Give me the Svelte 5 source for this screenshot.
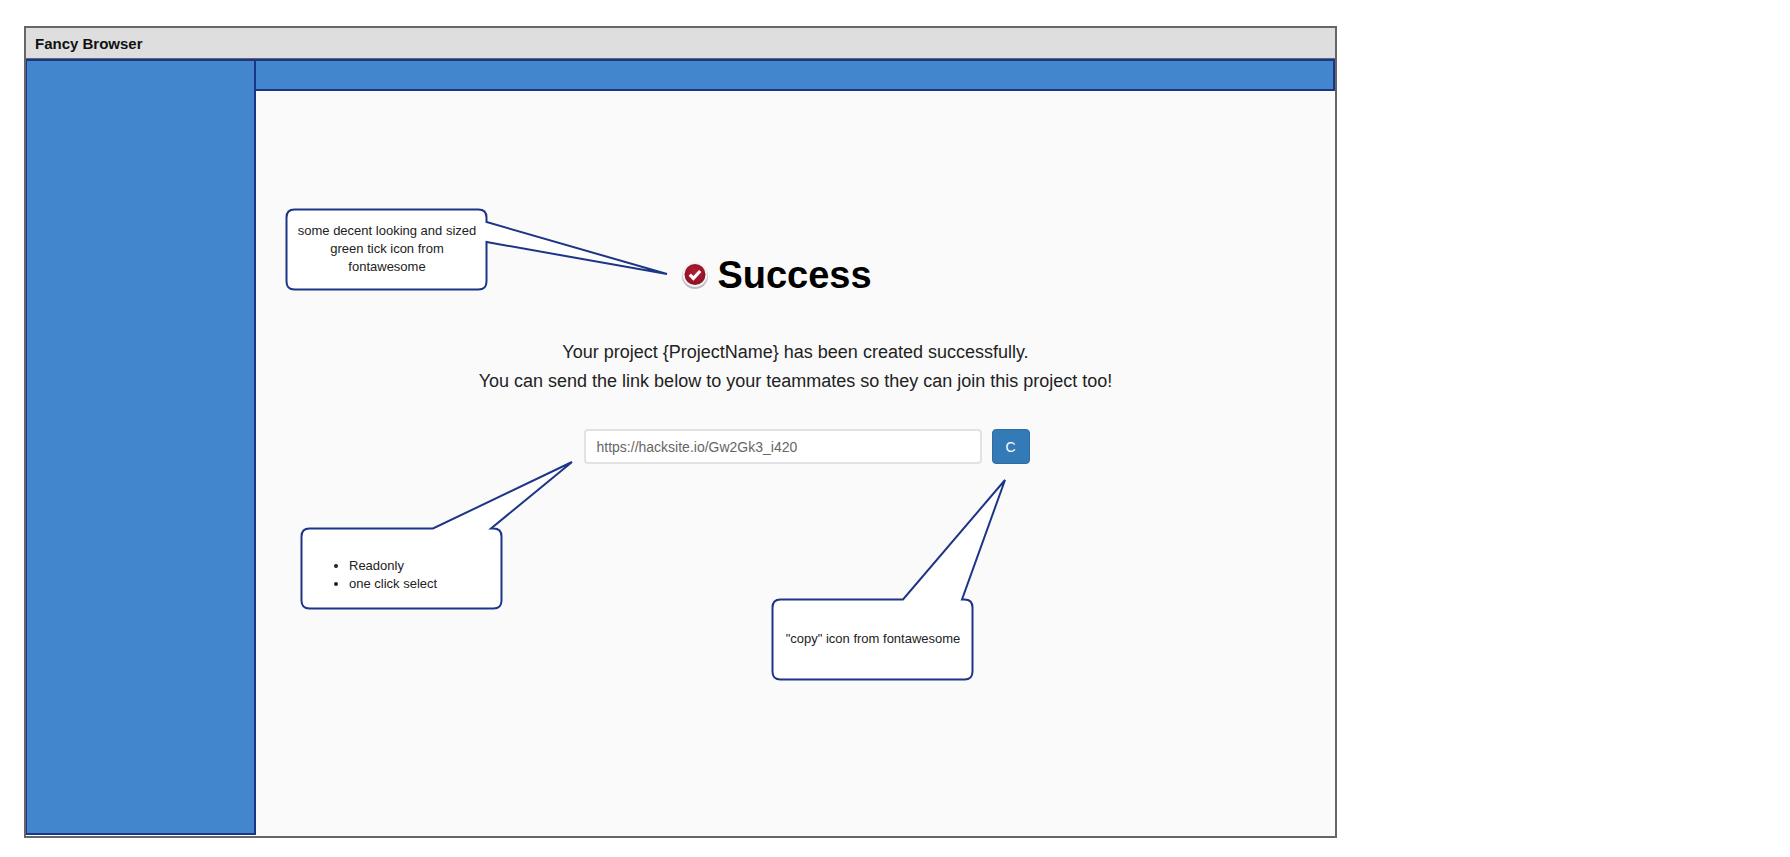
<script>
	function bubble(x0, y0, x1, y1, r, tail) {
		const start = tail.side === 'right'
			? `M${x0 + r} ${y0} H${x1 - r} Q${x1} ${y0} ${x1} ${y0 + r} V${tail.a} L${tail.x} ${tail.y} L${x1} ${tail.b} V${y1 - r}`
			: `M${x0 + r} ${y0} H${tail.a} L${tail.x} ${tail.y} L${tail.b} ${y0} H${x1 - r} Q${x1} ${y0} ${x1} ${y0 + r} V${y1 - r}`;
		return `${start} Q${x1} ${y1} ${x1 - r} ${y1} H${x0 + r} Q${x0} ${y1} ${x0} ${y1 - r} V${y0 + r} Q${x0} ${y0} ${x0 + r} ${y0} Z`;
	}

	const shapes = [
		bubble(286.5, 209.5, 486.5, 289.5, 8, { side: 'right', a: 222, b: 242, x: 667, y: 274 }),
		bubble(301.5, 528.5, 501.5, 608.5, 8, { side: 'top', a: 433, b: 491, x: 572, y: 462 }),
		bubble(772.5, 599.5, 972.5, 679.5, 8, { side: 'top', a: 903, b: 962, x: 1005, y: 480 })
	];
</script>

<div class="window">
	<div class="titlebar">Fancy Browser</div>
	<div class="body">
		<aside class="sidebar"></aside>
		<main class="main">
			<div class="toolbar"></div>
			<section class="result">
				<div class="heading">
					<svg class="tick" width="28" height="28" viewBox="0 0 28 28">
						<defs>
							<radialGradient id="red" cx="50%" cy="40%" r="60%">
								<stop offset="0" stop-color="#b81d35" />
								<stop offset="1" stop-color="#8c1224" />
							</radialGradient>
						</defs>
						<circle cx="14" cy="15" r="13" fill="#8a8a8a" opacity="0.55" />
						<circle cx="14" cy="13.5" r="12.5" fill="#f4f4f4" />
						<circle cx="14" cy="13.5" r="10.5" fill="url(#red)" />
						<path d="M8.8 13.6 L12.4 17.4 L19.2 10" fill="none" stroke="#fff" stroke-width="3.2" />
					</svg>
					<h1>Success</h1>
				</div>
				<p>Your project &#123;ProjectName&#125; has been created successfully.</p>
				<p>You can send the link below to your teammates so they can join this project too!</p>
				<div class="link-row">
					<input type="text" readonly value="https://hacksite.io/Gw2Gk3_i420" />
					<button type="button">C</button>
				</div>
			</section>
		</main>
	</div>
</div>

<svg class="bubbles" width="1790" height="857">
	{#each shapes as d}
		<path {d} fill="#fff" stroke="#1c3586" stroke-width="2" stroke-linejoin="miter" />
	{/each}
</svg>

<div class="note note-tick">some decent looking and sized green tick icon from fontawesome</div>
<div class="note note-input">
	<ul>
		<li>Readonly</li>
		<li>one click select</li>
	</ul>
</div>
<div class="note note-copy">"copy" icon from fontawesome</div>

<style>
	:global(body) {
		background: #fff;
		font-family: 'Liberation Sans', Arial, sans-serif;
	}
	.window {
		box-sizing: border-box;
		width: 1313px;
		height: 812px;
		margin: 26px 0 0 24px;
		border: 2px solid #666;
		display: flex;
		flex-direction: column;
	}
	.titlebar {
		box-sizing: border-box;
		height: 31px;
		padding-left: 9px;
		background: #dedede;
		border-bottom: 1px solid #666;
		font-size: 15px;
		font-weight: 700;
		line-height: 31px;
		color: #111;
	}
	.body {
		flex: 1;
		display: flex;
		min-height: 0;
	}
	.sidebar {
		box-sizing: border-box;
		width: 230px;
		height: 776px;
		background: #4287cd;
		border: 2px solid #1c3586;
		border-left-width: 1px;
	}
	.main {
		flex: 1;
		background: #fafafa;
	}
	.toolbar {
		box-sizing: border-box;
		height: 32px;
		background: #4287cd;
		border: 2px solid #1c3586;
		border-left-width: 0;
	}
	.result {
		padding-top: 164px;
		display: flex;
		flex-direction: column;
		align-items: center;
		color: #222;
	}
	.heading {
		display: flex;
		align-items: center;
		gap: 8px;
		height: 40px;
		margin: 0 38px 43px 0;
	}
	h1 {
		margin: 0;
		font-size: 38px;
		font-weight: 700;
		color: #000;
	}
	p {
		margin: 0;
		font-size: 18px;
		line-height: 29px;
	}
	.link-row {
		display: flex;
		gap: 10px;
		margin: 33px 0 0 22px;
	}
	input {
		box-sizing: border-box;
		width: 398px;
		height: 35px;
		padding: 0 11px;
		background: #fff;
		border: 2px solid #e2e2e2;
		border-radius: 4px;
		font-family: inherit;
		font-size: 14px;
		color: #666;
		outline: none;
	}
	button {
		width: 38px;
		height: 35px;
		padding: 0;
		background: #337ab7;
		border: 1px solid #2e6da4;
		border-radius: 4px;
		font-family: inherit;
		font-size: 14px;
		color: #fff;
	}
	.bubbles {
		position: absolute;
		left: 0;
		top: 0;
		pointer-events: none;
	}
	.note {
		position: absolute;
		box-sizing: border-box;
		width: 200px;
		height: 80px;
		display: flex;
		align-items: center;
		justify-content: center;
		padding: 0 8px;
		font-size: 13px;
		line-height: 18px;
		text-align: center;
		color: #222;
	}
	.note-tick {
		left: 287px;
		top: 209px;
	}
	.note-input {
		left: 302px;
		top: 529px;
		justify-content: flex-start;
		padding-top: 12px;
		text-align: left;
	}
	.note-copy {
		left: 773px;
		top: 599px;
	}
	ul {
		margin: 0;
		padding-left: 39px;
	}
</style>
